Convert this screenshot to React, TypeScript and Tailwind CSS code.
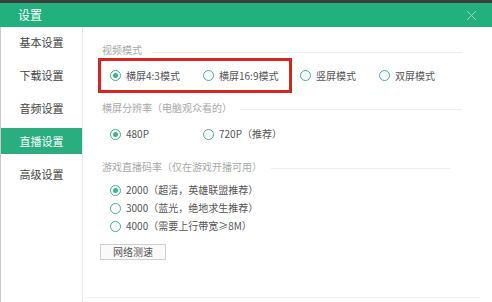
import React from 'react'

const menu = ['基本设置', '下载设置', '音频设置', '直播设置', '高级设置']

function Radio({ label, checked, className = '' }: { label: string; checked?: boolean; className?: string }) {
  return (
    <div className={`flex items-center shrink-0 ${className}`}>
      <span className="w-[11px] h-[11px] rounded-full border-[1.5px] border-[#36b587] flex items-center justify-center shrink-0">
        {checked && <span className="w-[5px] h-[5px] rounded-full bg-[#36b587]" />}
      </span>
      <span className="ml-[5px] text-[10px] leading-[14px] text-[#555] whitespace-nowrap">{label}</span>
    </div>
  )
}

function SectionTitle({ title, lineClass }: { title: string; lineClass: string }) {
  return (
    <div className="flex items-center h-[14px]">
      <span className="text-[10px] leading-[14px] text-[#a8a8a8] whitespace-nowrap">{title}</span>
      <div className={`flex-1 h-px bg-[#eeeeee] ${lineClass}`} />
    </div>
  )
}

export default function App() {
  return (
    <div className="w-[492px] h-[302px] bg-white flex flex-col overflow-hidden font-['Noto_Sans_CJK_SC','Noto_Sans',sans-serif]">
      <div className="h-[3px] bg-[#3b3d3d]" />

      {/* header */}
      <div className="h-[24px] bg-[#23b07f] flex items-center justify-between pl-[18px] pr-[15px]">
        <span className="text-white text-[12px] leading-none">设置</span>
        <svg width="11" height="11" viewBox="0 0 11 11" className="opacity-50">
          <path d="M1 1L10 10M10 1L1 10" stroke="#fff" strokeWidth="1" />
        </svg>
      </div>

      <div className="flex flex-1 border-l border-[#c9c9c9]">
        <aside className="w-[82px] border-r border-[#e6e6e6] pt-[2px] flex flex-col gap-[7px]">
          {menu.map((m) => (
            <div
              key={m}
              className={`h-[26px] flex items-center justify-center text-[11px] ${
                m === '直播设置' ? 'bg-[#2aae7f] text-white' : 'text-[#444]'
              }`}
            >
              {m}
            </div>
          ))}
        </aside>

        <main className="flex-1 flex flex-col pl-[19px]">
          <div className="mt-[16px]">
            <SectionTitle title="视频模式" lineClass="ml-[10px] mr-[30px] mt-[5px]" />
          </div>

          <div className="flex items-center mt-px">
            <div className="ml-[-4px] h-[35px] w-[194px] border-[3px] border-[#d6241f] pl-[9px] flex items-center">
              <Radio label="横屏4:3模式" checked className="w-[93px]" />
              <Radio label="横屏16:9模式" />
            </div>
            <Radio label="竖屏模式" className="ml-[8px] w-[79px]" />
            <Radio label="双屏模式" />
          </div>

          <div className="mt-[8px]">
            <SectionTitle title="横屏分辨率（电脑观众看的）" lineClass="ml-[8px] mr-[30px] mt-[3px]" />
          </div>

          <div className="flex items-center mt-[12px] ml-[8px] h-[14px]">
            <Radio label="480P" checked className="w-[93px]" />
            <Radio label="720P（推荐）" />
          </div>

          <div className="mt-[19px]">
            <SectionTitle title="游戏直播码率（仅在游戏开播可用）" lineClass="ml-[9px] mr-[42px] mt-[2px]" />
          </div>

          <div className="flex flex-col mt-[7px] ml-[8px]">
            <Radio label="2000（超清，英雄联盟推荐）" checked className="h-[18px]" />
            <Radio label="3000（蓝光，绝地求生推荐）" className="h-[18px]" />
            <Radio label="4000（需要上行带宽≥8M）" className="h-[18px]" />
          </div>

          <button className="mt-[9px] ml-[-2px] w-[66px] h-[16px] border border-[#cfcfcf] bg-[#fafafa] text-[10px] leading-none text-[#555] flex items-center justify-center">
            网络测速
          </button>

          <div className="mt-auto mb-[4px] ml-[-17px] mr-[12px] h-px bg-[#f3f3f3]" />
        </main>
      </div>
    </div>
  )
}
